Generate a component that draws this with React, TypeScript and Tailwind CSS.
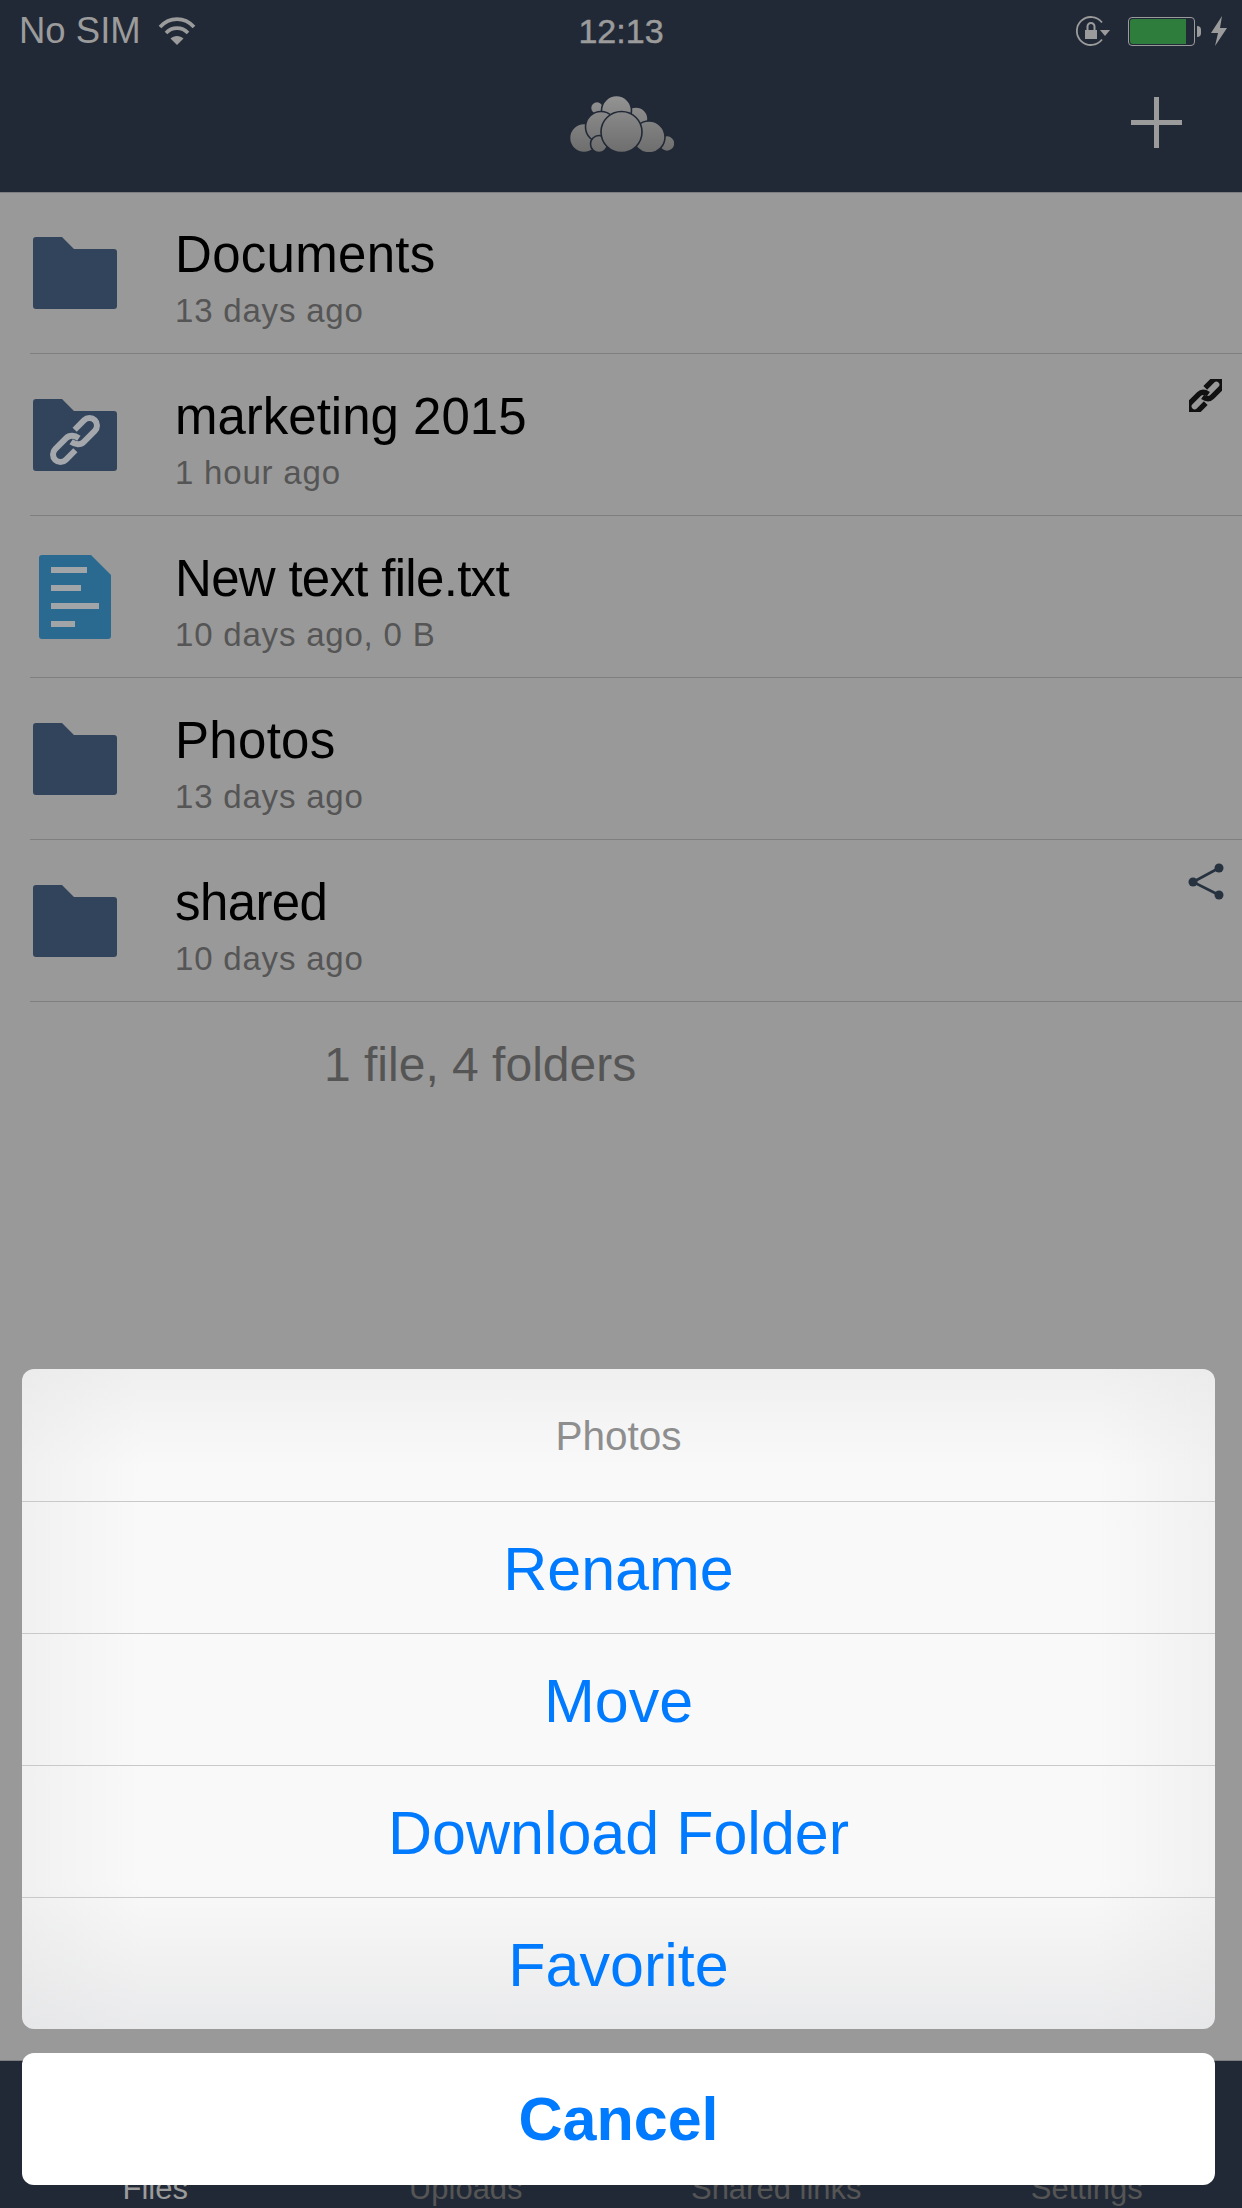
const Folder = ({ link }: { link?: boolean }) => (
  <svg width="84" height="72" viewBox="0 0 84 72">
    <path
      d="M3 0H29L41 12H81a3 3 0 0 1 3 3V69a3 3 0 0 1-3 3H3a3 3 0 0 1-3-3V3a3 3 0 0 1 3-3Z"
      fill="#32445c"
    />
    {link && <ChainLink x={42} y={41} color="#a4a7ab" width={6} />}
  </svg>
);

// two interlocked links, tilted 45deg, they hook into an S in the middle
const ChainLink = ({ x, y, color, width }: { x: number; y: number; color: string; width: number }) => (
  <g transform={`translate(${x} ${y}) rotate(-45)`} fill="none" stroke={color} strokeWidth={width}>
    <path d="M-7 7.5H-20.5a7.5 7.5 0 0 1 0-15H-5c5 0 8 4 9 9" />
    <path d="M7 -7.5H20.5a7.5 7.5 0 0 1 0 15H5c-5 0-8-4-9-9" />
  </g>
);

const DocIcon = () => (
  <svg width="72" height="84" viewBox="0 0 72 84">
    <path
      d="M3 0H52L72 20V81a3 3 0 0 1-3 3H3a3 3 0 0 1-3-3V3a3 3 0 0 1 3-3Z"
      fill="#2a6a90"
    />
    <rect x="12" y="12" width="36" height="6" fill="#a2a5a8" />
    <rect x="12" y="30" width="30" height="6" fill="#a2a5a8" />
    <rect x="12" y="48" width="48" height="6" fill="#a2a5a8" />
    <rect x="12" y="66" width="24" height="6" fill="#a2a5a8" />
  </svg>
);

const Cloud = () => (
  <svg width="105" height="56" viewBox="569 96 105 56">
    <defs>
      <linearGradient id="cloud" gradientUnits="userSpaceOnUse" x1="0" y1="96" x2="0" y2="152">
        <stop offset="0" stopColor="#939393" />
        <stop offset="1" stopColor="#6e6e6e" />
      </linearGradient>
    </defs>
    <g fill="url(#cloud)" stroke="#222936" strokeWidth="1.6">
      <circle cx="584" cy="138" r="14.5" />
      <circle cx="597" cy="108" r="6.5" />
      <circle cx="667" cy="143.5" r="8" />
      <circle cx="636" cy="119" r="12" />
      <circle cx="616.5" cy="110.5" r="15" />
      <circle cx="601" cy="127" r="15.5" />
      <circle cx="599" cy="144" r="8.5" />
      <circle cx="649" cy="137" r="16" />
      <circle cx="621.5" cy="132" r="20.5" />
    </g>
  </svg>
);

const rows = [
  { name: "Documents", sub: "13 days ago", icon: <Folder />, track: "tracking-[0.3px]" },
  { name: "marketing 2015", sub: "1 hour ago", icon: <Folder link />, badge: "link", track: "tracking-normal" },
  { name: "New text file.txt", sub: "10 days ago, 0 B", icon: <DocIcon />, doc: true, track: "tracking-[-0.7px]" },
  { name: "Photos", sub: "13 days ago", icon: <Folder />, track: "tracking-[0.3px]" },
  { name: "shared", sub: "10 days ago", icon: <Folder />, badge: "share", track: "tracking-[-0.6px]" },
];

const actions = ["Rename", "Move", "Download Folder", "Favorite"];
const tabs = ["Files", "Uploads", "Shared links", "Settings"];

export default function App() {
  return (
    <div className="relative flex h-[2208px] w-[1242px] flex-col overflow-hidden bg-[#999999] font-['Liberation_Sans',sans-serif]">
      {/* status bar + nav */}
      <header className="relative mb-[-1px] h-[193px] shrink-0 border-b border-[#7c7e82] bg-[#222936]">
        <div className="flex h-[62px] items-center justify-between pl-[19px] pr-[15px] text-[#9b9b9b]">
          <div className="flex items-center gap-[17px]">
            <span className="text-[36.5px] leading-none">No SIM</span>
            <svg width="38" height="28" viewBox="0 0 38 28" fill="none" stroke="#9b9b9b" strokeWidth="3.6">
              <path d="M2 10C11.5 -0.5 26.5 -0.5 36 10" />
              <path d="M8 16C14 9.5 24 9.5 30 16" />
              <path d="M19 28L12.5 21.5C16 18 22 18 25.5 21.5Z" fill="#9b9b9b" stroke="none" />
            </svg>
          </div>
          <div className="flex items-center">
            <svg width="36" height="30" viewBox="0 0 36 30" fill="none">
              <path d="M26 6.5A14 14 0 1 0 26 23.5" stroke="#9b9b9b" strokeWidth="1.8" />
              <path d="M24 14H34L29 20Z" fill="#9b9b9b" />
              <rect x="9" y="14" width="12" height="9" fill="#9b9b9b" />
              <path d="M11.5 14V10.5a3.5 3.5 0 0 1 7 0V14" stroke="#9b9b9b" strokeWidth="2" />
            </svg>
            <div className="ml-[16px] flex h-[29px] w-[67px] rounded-[4px] border border-[#9b9b9b] p-[1px]">
              <div className="h-full w-[56px] rounded-l-[3px] bg-[#2e7d3c]" />
            </div>
            <div className="ml-[2px] h-[11px] w-[4px] rounded-r-full bg-[#9b9b9b]" />
            <svg className="ml-[10px]" width="16" height="30" viewBox="0 0 16 30">
              <path d="M11 0L0 17H7L4 30L16 12H9Z" fill="#9b9b9b" />
            </svg>
          </div>
        </div>
        <span className="absolute left-[621px] top-[31px] -translate-x-1/2 -translate-y-1/2 text-[34px] leading-none text-[#9b9b9b] [-webkit-text-stroke:0.5px_#9b9b9b]">
          12:13
        </span>
        <div className="absolute left-[569px] top-[96px]">
          <Cloud />
        </div>
        <svg className="absolute left-[1131px] top-[97px]" width="51" height="51" viewBox="0 0 51 51">
          <path d="M23 0h5v23h23v5H28v23h-5V28H0v-5h23Z" fill="#9b9b9b" />
        </svg>
      </header>

      {/* file list */}
      <main className="flex-1">
        {rows.map((row) => (
          <div
            key={row.name}
            className="relative ml-[30px] flex h-[162px] items-center border-b border-[#7f7f7f]"
          >
            <div className={row.doc ? "w-[145px] pl-[9px]" : "w-[145px] pl-[3px]"}>{row.icon}</div>
            <div className="flex flex-col pt-[12px]">
              <span className={`text-[51px] leading-[56px] text-black ${row.track}`}>{row.name}</span>
              <span className="mt-[8px] text-[33px] leading-[40px] tracking-[0.8px] text-[#555555]">
                {row.sub}
              </span>
            </div>
            {row.badge === "link" && (
              <svg className="absolute left-[1159px] top-[25px]" width="33" height="33" viewBox="-22 -22 44 44">
                <ChainLink x={0} y={0} color="#111111" width={7} />
              </svg>
            )}
            {row.badge === "share" && (
              <svg className="absolute left-[1155px] top-[20px]" width="40" height="40" viewBox="0 0 40 40">
                <path d="M34 8L8 22L34 35" fill="none" stroke="#26323f" strokeWidth="2.6" />
                <circle cx="8" cy="22" r="4.5" fill="#26323f" />
                <circle cx="34" cy="8" r="4.5" fill="#26323f" />
                <circle cx="34" cy="35" r="4.5" fill="#26323f" />
              </svg>
            )}
          </div>
        ))}
        <p className="pl-[324px] pt-[36px] text-[48px] leading-[54px] text-[#555555]">1 file, 4 folders</p>
      </main>

      {/* tab bar, mostly hidden behind the sheet */}
      <footer className="grid h-[148px] shrink-0 grid-cols-4 items-end border-t border-[#7c7e82] bg-[#222936] pb-[1px] text-center text-[31px] leading-[36px]">
        {tabs.map((tab, i) => (
          <span key={tab} className={i === 0 ? "text-[#9b9b9b]" : "text-[#555555]"}>
            {tab}
          </span>
        ))}
      </footer>

      {/* action sheet */}
      <div className="absolute left-[22px] top-[1369px] flex w-[1193px] flex-col gap-[24px]">
        <div className="flex flex-col divide-y divide-[#c9c9cc] overflow-hidden rounded-[12px] bg-[#f9f9f9] bg-[linear-gradient(to_bottom,#e6e6e680,#f9f9f900_15%,#f9f9f900_78%,#e0e1e3a0_100%),linear-gradient(to_right,#e6e6e670,#f9f9f900_10%,#f9f9f900_90%,#e6e6e670_100%)]">
          <div className="flex h-[133px] items-center justify-center pt-[3px] text-[40.5px] text-[#8e8e8e]">
            Photos
          </div>
          {actions.map((a, i) => (
            <div
              key={a}
              className={`flex items-center justify-center pt-[5px] text-[61px] text-[#007aff] ${
                i === actions.length - 1 ? "h-[131px]" : "h-[132px]"
              }`}
            >
              {a}
            </div>
          ))}
        </div>
        <div className="flex h-[132px] items-center justify-center rounded-[12px] bg-white pt-[2px] text-[61px] font-bold text-[#007aff]">
          Cancel
        </div>
      </div>
    </div>
  );
}
